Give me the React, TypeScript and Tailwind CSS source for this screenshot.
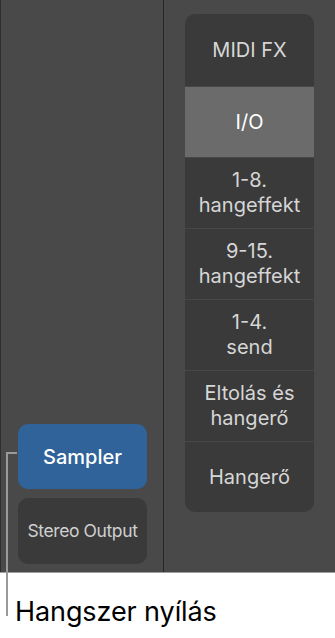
import React from 'react';

const rows = [
  { label: ['MIDI FX'], active: false },
  { label: ['I/O'], active: true },
  { label: ['1-8.', 'hangeffekt'], active: false },
  { label: ['9-15.', 'hangeffekt'], active: false },
  { label: ['1-4.', 'send'], active: false },
  { label: ['Eltolás és', 'hangerő'], active: false },
  { label: ['Hangerő'], active: false },
];

const font = { fontFamily: 'Inter, "Liberation Sans", sans-serif' };

export default function App() {
  return (
    <div className="relative w-[335px] h-[638px] bg-white overflow-hidden" style={font}>
      {/* Mixer area */}
      <div className="flex h-[573px] bg-[#494949] border-b border-[#a0a0a0]">
        {/* Channel strip */}
        <div className="w-[164px] flex flex-col justify-end gap-[9px] pl-[17px] pr-[16px] pb-[8px] border-l border-[#2e2e2e] border-r border-r-[#262626]">
          <div className="h-[65px] rounded-[10px] bg-[#2f6399] flex items-center justify-center text-white text-[20px] font-medium">
            Sampler
          </div>
          <div className="h-[66px] rounded-[10px] bg-[#3a3a3a] flex items-center justify-center text-[#d0d0d0] text-[17.5px] tracking-[-0.4px] whitespace-nowrap">
            Stereo Output
          </div>
        </div>

        {/* Strip view selector */}
        <div className="flex-1 pl-[21px] pt-[14px]">
          <div className="w-[129px] rounded-[10px] overflow-hidden bg-[#3a3a3a]">
            {rows.map((r, i) => (
              <div
                key={i}
                className={`flex flex-col items-center justify-center text-[20px] leading-[25px] text-center whitespace-nowrap ${
                  i === 0 ? 'h-[72px]' : 'h-[71px] border-t border-[#474747]'
                } ${r.active ? 'bg-[#6b6b6b] text-white' : 'text-[#d6d6d6]'}`}
              >
                {r.label.map((l) => (
                  <span key={l}>{l}</span>
                ))}
              </div>
            ))}
          </div>
        </div>
      </div>

      {/* Callout */}
      <div className="absolute left-[6px] top-[452px] w-[11px] h-[2px] bg-[#9a9a9a]" />
      <div className="absolute left-[6px] top-[452px] w-[2px] h-[164px] bg-[#9a9a9a]" />
      <div className="pl-[15px] pt-[22px] text-[27px] leading-[34px] text-black tracking-[-0.1px]">
        Hangszer nyílás
      </div>
    </div>
  );
}
